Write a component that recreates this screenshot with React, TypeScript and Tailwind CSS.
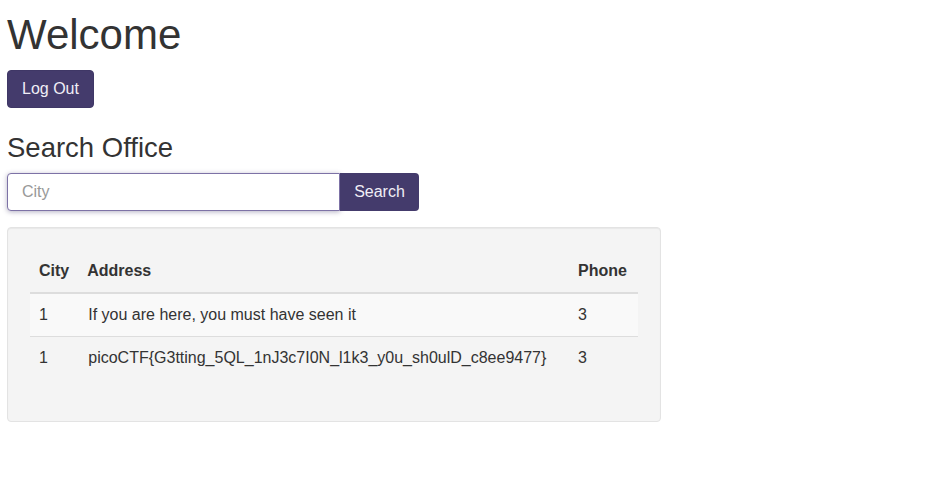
export default function App() {
  const rows = [
    { city: "1", address: "If you are here, you must have seen it", phone: "3" },
    {
      city: "1",
      address: "picoCTF{G3tting_5QL_1nJ3c7I0N_l1k3_y0u_sh0ulD_c8ee9477}",
      phone: "3",
    },
  ];

  return (
    <div className="min-h-screen bg-white px-[7px] text-[16px] leading-6 text-[#333] font-['Liberation_Sans',Arial,sans-serif]">
      <h1 className="pt-[10px] text-[42px] leading-[1.2] font-normal">Welcome</h1>
      <button className="mt-[10px] h-[38px] rounded-[4px] border border-[#3f3766] bg-[#443b6c] px-[14px] text-[16px] text-[#f0eef6]">
        Log Out
      </button>

      <h3 className="mt-[23px] text-[27.5px] leading-[1.2] font-normal">Search Office</h3>
      <div className="mt-[9px] flex w-[412px]">
        <input
          placeholder="City"
          className="h-[38px] w-[333px] rounded-l-[4px] border border-[#7d72a6] bg-white px-[14px] text-[16px] text-[#555] placeholder:text-[#999] shadow-[0_1px_5px_rgba(68,59,108,0.4)] outline-none"
        />
        <button className="h-[38px] flex-1 rounded-r-[4px] bg-[#443b6c] text-[16px] text-[#f0eef6]">
          Search
        </button>
      </div>

      <div className="mt-[16px] w-[654px] rounded-[4px] border border-[#e3e3e3] bg-[#f4f4f4] px-[22px] pt-[22px] pb-[22px] shadow-[inset_0_1px_1px_rgba(0,0,0,0.05)]">
        <table className="mb-[20px] w-full border-collapse text-left">
          <thead>
            <tr className="border-b-2 border-[#dddddd]">
              <th className="w-[1%] whitespace-nowrap px-[9px] py-[9px] font-bold">City</th>
              <th className="px-[9px] py-[9px] font-bold">Address</th>
              <th className="w-[1%] whitespace-nowrap pl-[7px] pr-[11px] py-[9px] font-bold">Phone</th>
            </tr>
          </thead>
          <tbody>
            {rows.map((r, i) => (
              <tr
                key={i}
                className={`${i > 0 ? "border-t border-[#dddddd]" : ""} ${
                  i % 2 === 0 ? "bg-[#f9f9f9]" : ""
                }`}
              >
                <td className="px-[9px] py-[9px]">{r.city}</td>
                <td className="pl-[10px] pr-[9px] py-[9px]">{r.address}</td>
                <td className="pl-[7px] pr-[11px] py-[9px]">{r.phone}</td>
              </tr>
            ))}
          </tbody>
        </table>
      </div>
    </div>
  );
}
